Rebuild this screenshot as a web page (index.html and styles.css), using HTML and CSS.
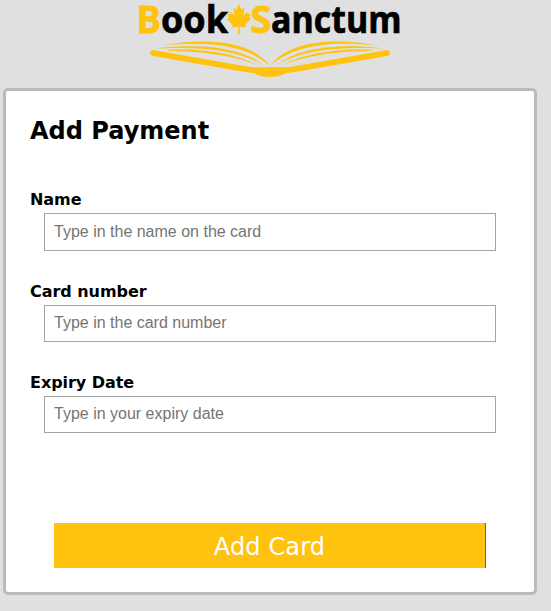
FILE: index.html
```html
<!DOCTYPE html>
<html lang="en">
<head>
<meta charset="utf-8">
<title>Add Payment</title>
<link rel="stylesheet" href="styles.css">
</head>
<body>
<header class="header">
<svg class="logo" viewBox="130 0 280 85" role="img" aria-label="BookSanctum">
  <g class="wordmark">
    <text class="gold" x="136.500" y="33" textLength="24.500" lengthAdjust="spacingAndGlyphs">B</text>
    <text class="ink" x="161" y="33" textLength="67" lengthAdjust="spacingAndGlyphs">ook</text>
    <text class="gold" x="250.500" y="33" textLength="21" lengthAdjust="spacingAndGlyphs">S</text>
    <text class="ink" x="271" y="33" textLength="130.500" lengthAdjust="spacingAndGlyphs">anctum</text>
  </g>
  <path class="gold" transform="translate(239 0) scale(.83 1) translate(-238.700 0)" d="M238.700 4l3 5.500 3.500-1.800-1.200 8 4.200-4 1 2.500 3.300-.8-1.200 4.300 1.800 1.300-7 6 .8 2.600-7-1-.5 0 .3 7.400h-2.200l.3-7.400-7.300 1 .8-2.600-7-6 1.800-1.300-1.200-4.300 3.300 .8 1-2.500 4.200 4-1.200-8 3.500 1.800z"/>
  <g class="gold" id="page">
    <path d="M153 50L247 66.500Q254 67.500 260 67.300L270 67V77Q260 77 254 73Q248 72.500 242 71.500L152 55.800A3 3 0 0 1 153 50Z"/>
    <path d="M163 45.500C207 37 252 41 270 66C250 48 218 40 163 45.500Z"/>
    <path d="M159 48C208 43 243 49 264 65.500C240 51 207 46.500 159 48.600Z"/>
    <path d="M168 49.800C205 47.500 240 55 258 65.500C237 56.500 208 51.500 168 50.800Z"/>
  </g>
  <use href="#page" transform="matrix(-1 0 0 1 540 0)"/>
</svg>
</header>
<main class="card">
  <h1>Add Payment</h1>
  <form>
    <div class="field"><label for="name">Name</label><input class="tall" id="name" placeholder="Type in the name on the card"></div>
    <div class="field"><label for="number">Card number</label><input id="number" placeholder="Type in the card number"></div>
    <div class="field"><label for="expiry">Expiry Date</label><input id="expiry" placeholder="Type in your expiry date"></div>
    <button type="button">Add Card</button>
  </form>
</main>
</body>
</html>
```
FILE: styles.css
```css
* { box-sizing: border-box; }
body { margin: 0; height: 611px; overflow: hidden; background: #e0e0e0; font-family: Verdana, "DejaVu Sans", sans-serif; }
.header { height: 88px; padding-left: 130px; }
.logo { display: block; width: 280px; height: 85px; }
.wordmark { font: bold 37.5px "Open Sans", sans-serif; }
.gold { fill: #ffc20e; }
.wordmark .gold { stroke: #ffc20e; stroke-width: .8; }
.ink { stroke: #000; stroke-width: .7; }
.card { width: 534px; height: 507px; margin-left: 3px; padding: 24px 38px 0 24px; border: 3px solid #bbb; border-radius: 5px; background: #fff; }
h1 { height: 30px; margin: 0 0 44px; font-size: 24px; line-height: 32px; }
form { display: flex; flex-direction: column; }
.field { display: flex; flex-direction: column; height: 91px; }
.field:first-child { height: 92px; }
label { height: 24px; font-size: 16px; font-weight: bold; line-height: 22px; letter-spacing: -.05px; }
input { height: 37px; margin-left: 14px; width: 452px; padding: 0 9px 1px; border: 1px solid #a5a5a5; border-radius: 0; font: 16px "Liberation Sans", sans-serif; }
.tall { height: 38px; }
input::placeholder { color: #757575; opacity: 1; }
button { width: 432px; height: 45px; margin: 60px 0 0 24px; padding: 2px 0 0; border: 0; border-right: 1px solid #c0390f; background: #ffc20e; color: #fff; font: 24px "DejaVu Sans", sans-serif; letter-spacing: .15px; }
```
